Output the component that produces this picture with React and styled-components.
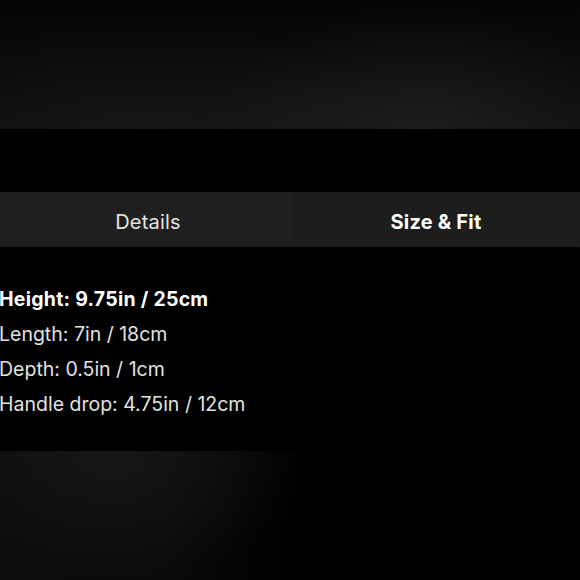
import React, { useState } from 'react';
import styled, { createGlobalStyle } from 'styled-components';

const GlobalStyle = createGlobalStyle`
  html, body {
    margin: 0;
    padding: 0;
    background: #000;
  }
  body {
    font-family: Inter, "Noto Sans", "Liberation Sans", sans-serif;
    color: #e6e6e6;
    overflow: hidden;
  }
`;

const Page = styled.div`
  width: 580px;
  height: 580px;
  display: flex;
  flex-direction: column;
  background: #000;
  overflow: hidden;

  & > * {
    flex-shrink: 0;
  }
`;

const Hero = styled.div`
  height: 129px;
  background:
    radial-gradient(ellipse 220px 120px at 420px 129px, rgba(40, 40, 40, 0.55), rgba(0, 0, 0, 0) 100%),
    radial-gradient(ellipse 240px 110px at 150px 129px, rgba(30, 30, 28, 0.45), rgba(0, 0, 0, 0) 100%),
    linear-gradient(180deg, #050505 0%, #0b0b0b 60%, #101010 100%);
`;

const Tabs = styled.div`
  margin-top: 63px;
  height: 55px;
  display: flex;
  background: #1f1f1f;
  padding-left: 4px;
`;

const Tab = styled.button`
  flex: 1;
  border: none;
  padding: 4px 0 0;
  font-family: inherit;
  font-size: 20px;
  letter-spacing: 0.2px;
  color: ${(p) => (p.$active ? '#ffffff' : '#e4e4e4')};
  font-weight: ${(p) => (p.$active ? 700 : 400)};
  background: ${(p) => (p.$active ? '#1d1d1d' : 'transparent')};
  border-radius: ${(p) => (p.$active ? '3px' : '0')};
  margin: ${(p) => (p.$active ? '1px 0' : '0')};
  cursor: pointer;
`;

const Specs = styled.ul`
  list-style: none;
  margin: 35px 0 0 -1px;
  padding: 0;
  display: flex;
  flex-direction: column;
`;

const Spec = styled.li`
  font-size: 19.5px;
  line-height: 35px;
  height: 35px;
  color: ${(p) => (p.$strong ? '#ffffff' : '#e2e2e2')};
  font-weight: ${(p) => (p.$strong ? 700 : 400)};
  letter-spacing: ${(p) => (p.$strong ? '0.25px' : '0')};
  white-space: nowrap;
`;

const Footer = styled.div`
  margin-top: 29px;
  height: 129px;
  width: 302px;
  background:
    radial-gradient(ellipse 200px 130px at 110px 0px, rgba(24, 24, 24, 0.9), rgba(0, 0, 0, 0) 100%),
    linear-gradient(90deg, #0b0b0b 0%, #0a0a0a 55%, #030303 85%, #000 100%);
`;

const specs = [
  'Height: 9.75in / 25cm',
  'Length: 7in / 18cm',
  'Depth: 0.5in / 1cm',
  'Handle drop: 4.75in / 12cm',
];

export default function App() {
  const [tab, setTab] = useState('size');
  return (
    <Page>
      <GlobalStyle />
      <Hero />
      <Tabs>
        <Tab $active={tab === 'details'} onClick={() => setTab('details')}>
          Details
        </Tab>
        <Tab $active={tab === 'size'} onClick={() => setTab('size')}>
          Size &amp; Fit
        </Tab>
      </Tabs>
      <Specs>
        {specs.map((s, i) => (
          <Spec key={s} $strong={i === 0}>
            {s}
          </Spec>
        ))}
      </Specs>
      <Footer />
    </Page>
  );
}
